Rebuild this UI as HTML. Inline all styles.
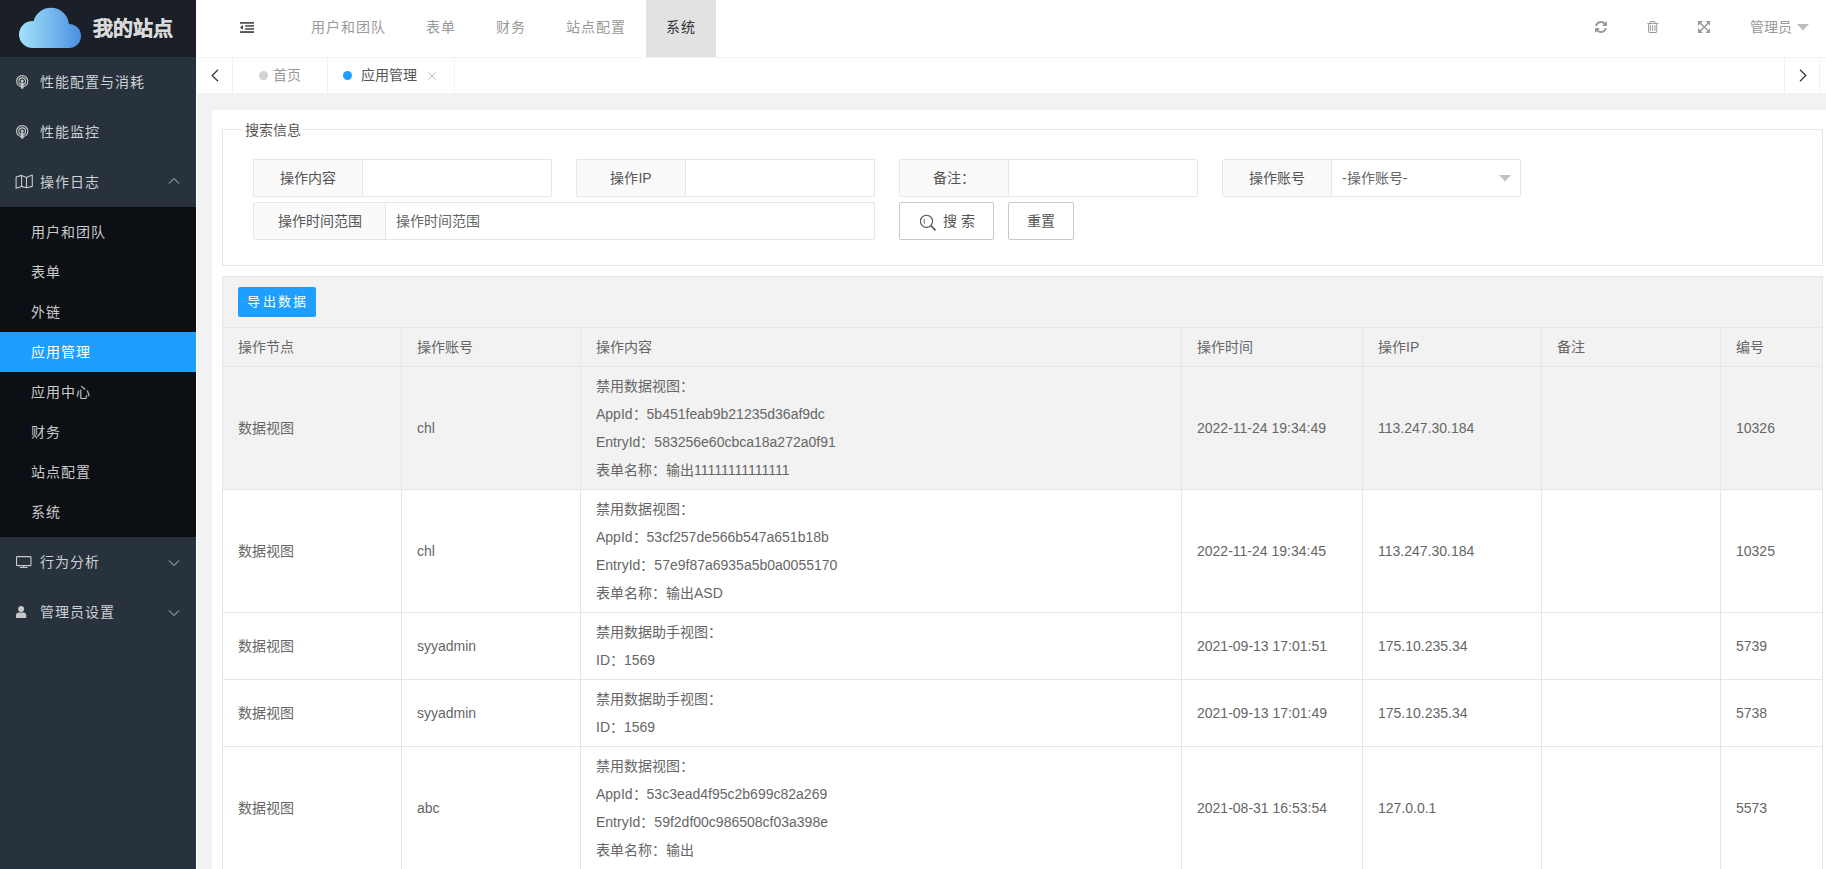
<!DOCTYPE html>
<html lang="zh-CN">
<head>
<meta charset="utf-8">
<style>
*{margin:0;padding:0;box-sizing:border-box}
html,body{width:1826px;height:869px;overflow:hidden;background:#f2f2f2;font-family:"Liberation Sans",sans-serif;font-size:14px;color:#666}
.abs{position:absolute}
.a{position:absolute;white-space:nowrap}
#side{position:absolute;left:0;top:0;width:196px;height:869px;background:#28323c}
#logo{position:absolute;left:0;top:0;width:196px;height:57px;background:#1b2028}
#logo .t{position:absolute;left:93px;top:14px;font-size:20px;font-weight:bold;color:#d9d9d9;line-height:30px;-webkit-text-stroke:0.4px #d9d9d9}
.mi{position:absolute;left:0;width:196px;height:50px;line-height:50px;color:rgba(255,255,255,.78);font-size:14px;letter-spacing:1px}
.mi .tx{position:absolute;left:40px;top:0}
.mi svg{position:absolute}
#sub{position:absolute;left:0;top:207px;width:196px;height:330px;background:#0c0f13}
.si{position:absolute;left:0;width:196px;height:40px;line-height:40px;color:rgba(255,255,255,.78);font-size:14px;letter-spacing:1px}
.si .tx{position:absolute;left:31px;top:0}
.si.on{background:#1e9fff;color:#fff}
#sideline{position:absolute;left:196px;top:0;width:1px;height:869px;background:#fff}
#hdr{position:absolute;left:197px;top:0;width:1629px;height:58px;background:#fff;border-bottom:1px solid #f2f2f2}
.nav{position:absolute;top:0;height:57px;line-height:54px;color:#999;font-size:14px;letter-spacing:1px}
#tabs{position:absolute;left:197px;top:58px;width:1629px;height:35px;background:#fff}
.tsep{position:absolute;top:0;width:1px;height:35px;background:#f2f2f2}
#card{position:absolute;left:212px;top:110px;width:1630px;height:800px;background:#fff;border-radius:2px}
.box{position:absolute;height:38px;border:1px solid #e6e6e6;border-radius:2px;background:#fff}
.box .lb{position:absolute;left:0;top:0;height:36px;line-height:36px;background:#fafafa;border-right:1px solid #e6e6e6;text-align:center;color:#555}
.btn{position:absolute;height:38px;line-height:36px;border:1px solid #c9c9c9;border-radius:2px;background:#fff;color:#555;text-align:center}
.hl{position:absolute;height:1px;background:#e6e6e6}
.vl{position:absolute;width:1px;background:#e6e6e6}
.c{position:absolute;white-space:nowrap;line-height:28px;color:#666}
</style>
</head>
<body>
<div id="side">
  <div id="logo">
    <svg class="abs" style="left:0;top:0" width="90" height="57" viewBox="0 0 90 57">
      <defs><linearGradient id="cg" gradientUnits="userSpaceOnUse" x1="19" y1="0" x2="81" y2="0"><stop offset="0" stop-color="#a3e2fa"/><stop offset="0.5" stop-color="#78baee"/><stop offset="1" stop-color="#4a8ee0"/></linearGradient></defs>
      <g fill="url(#cg)">
        <circle cx="32.5" cy="34.5" r="13.5"/>
        <circle cx="51" cy="25.7" r="18"/>
        <circle cx="69" cy="36" r="12"/>
        <rect x="32" y="30" width="38" height="18"/>
      </g>
    </svg>
    <div class="t">我的站点</div>
  </div>
  <div class="mi" style="top:57px">
    <svg style="left:15px;top:17px" width="15" height="16" viewBox="0 0 15 16"><g fill="none" stroke="#c8c8c8" stroke-width="1.1"><circle cx="7.2" cy="7.2" r="5.6"/><circle cx="7.2" cy="7.2" r="3.3"/></g><circle cx="7.2" cy="7" r="1.5" fill="#c8c8c8"/><rect x="5.8" y="8.6" width="2.8" height="6.2" rx="1.1" fill="#c8c8c8"/></svg>
    <span class="tx">性能配置与消耗</span></div>
  <div class="mi" style="top:107px">
    <svg style="left:15px;top:17px" width="15" height="16" viewBox="0 0 15 16"><g fill="none" stroke="#c8c8c8" stroke-width="1.1"><circle cx="7.2" cy="7.2" r="5.6"/><circle cx="7.2" cy="7.2" r="3.3"/></g><circle cx="7.2" cy="7" r="1.5" fill="#c8c8c8"/><rect x="5.8" y="8.6" width="2.8" height="6.2" rx="1.1" fill="#c8c8c8"/></svg>
    <span class="tx">性能监控</span></div>
  <div class="mi" style="top:157px">
    <svg style="left:15px;top:17px" width="19" height="16" viewBox="0 0 19 16"><path d="M1.1 3 L6.6 1.4 L11.5 3.4 L17.3 1.1 V12.4 L11.5 13.7 L6.6 12.4 L1.1 14.3 Z M6.6 1.4 V12.4 M11.5 3.4 V13.7" fill="none" stroke="#c8c8c8" stroke-width="1.1" stroke-linejoin="round"/></svg>
    <span class="tx">操作日志</span>
    <svg style="left:168px;top:19.5px" width="13" height="8" viewBox="0 0 13 8"><path d="M1 6.5 L6 1.5 L11 6.5" fill="none" stroke="#c8c8c8" stroke-width="1"/></svg>
  </div>
  <div id="sub">
    <div class="si" style="top:5px"><span class="tx">用户和团队</span></div>
    <div class="si" style="top:45px"><span class="tx">表单</span></div>
    <div class="si" style="top:85px"><span class="tx">外链</span></div>
    <div class="si on" style="top:125px"><span class="tx">应用管理</span></div>
    <div class="si" style="top:165px"><span class="tx">应用中心</span></div>
    <div class="si" style="top:205px"><span class="tx">财务</span></div>
    <div class="si" style="top:245px"><span class="tx">站点配置</span></div>
    <div class="si" style="top:285px"><span class="tx">系统</span></div>
  </div>
  <div class="mi" style="top:537px">
    <svg style="left:15px;top:17px" width="18" height="15" viewBox="0 0 18 15"><rect x="1.55" y="2.65" width="14.4" height="9" rx="0.6" fill="none" stroke="#c8c8c8" stroke-width="1.1"/><path d="M8.75 11.7 V13.4 M4.8 13.5 H12.5" stroke="#c8c8c8" stroke-width="1.1"/></svg>
    <span class="tx">行为分析</span>
    <svg style="left:168px;top:21.5px" width="13" height="8" viewBox="0 0 13 8"><path d="M1 1.5 L6 6.5 L11 1.5" fill="none" stroke="#c8c8c8" stroke-width="1"/></svg>
  </div>
  <div class="mi" style="top:587px">
    <svg style="left:15px;top:18px" width="12" height="14" viewBox="0 0 12 14"><circle cx="6.1" cy="4" r="3" fill="#c8c8c8"/><path d="M1 13 V10.4 Q1 7.5 3.9 7.5 H8.3 Q11.2 7.5 11.2 10.4 V13 Z" fill="#c8c8c8"/></svg>
    <span class="tx">管理员设置</span>
    <svg style="left:168px;top:21.5px" width="13" height="8" viewBox="0 0 13 8"><path d="M1 1.5 L6 6.5 L11 1.5" fill="none" stroke="#c8c8c8" stroke-width="1"/></svg>
  </div>
</div>
<div id="sideline"></div>

<div id="hdr">
  <svg class="abs" style="left:43px;top:22px" width="14" height="11" viewBox="0 0 14 11"><g fill="#444"><rect x="0" y="0.1" width="14" height="1.6"/><rect x="5.2" y="3.2" width="8.8" height="1.5"/><rect x="5.2" y="6.2" width="8.8" height="1.5"/><rect x="0" y="9.2" width="14" height="1.7"/><path d="M0 5.4 L3 3 V7.8 Z"/></g></svg>
  <span class="nav" style="left:114px">用户和团队</span>
  <span class="nav" style="left:229px">表单</span>
  <span class="nav" style="left:299px">财务</span>
  <span class="nav" style="left:369px">站点配置</span>
  <div class="abs" style="left:449px;top:0;width:70px;height:57px;background:#e2e2e2"></div>
  <span class="nav" style="left:469px;color:#333">系统</span>
  <!-- right icons -->
  <svg class="abs" style="left:1398px;top:21px" width="12" height="12" viewBox="0 0 1536 1536"><path fill="#999" d="M1511 928q0 5-1 7-64 268-268 434.5T764 1536q-146 0-282.5-55T238 1324l-129 129q-19 19-45 19t-45-19-19-45V960q0-26 19-45t45-19h448q26 0 45 19t19 45-19 45l-137 137q71 66 161 102t187 36q134 0 250-65t186-179q11-17 53-117 8-23 30-23h192q13 0 22.5 9.5t9.5 22.5zm25-800v448q0 26-19 45t-45 19h-448q-26 0-45-19t-19-45 19-45l138-138Q969 256 768 256q-134 0-250 65T332 500q-11 17-53 117-8 23-30 23H50q-13 0-22.5-9.5T18 608v-7q65-268 270-434.5T768 0q146 0 284 55.5T1297 212l130-129q19-19 45-19t45 19 19 45z"/></svg>
  <svg class="abs" style="left:1450px;top:21px" width="12" height="12" viewBox="0 0 12 12"><g fill="none" stroke="#999" stroke-width="1"><path d="M0.3 2.4 H11.3"/><path d="M3.3 2.4 V1.2 Q3.3 0.5 4 0.5 H7.3 Q8 0.5 8 1.2 V2.4"/><path d="M1.6 2.4 V10.8 Q1.6 11.5 2.3 11.5 H9 Q9.7 11.5 9.7 10.8 V2.4"/><path d="M3.35 4.2 V9.8 M5.65 4.2 V9.8 M7.95 4.2 V9.8"/></g></svg>
  <svg class="abs" style="left:1500.5px;top:21px" width="12.5" height="12" viewBox="0 0 12.5 12"><g fill="#999"><path d="M0 0 H5 L0 5 Z"/><path d="M12.5 0 H7.5 L12.5 5 Z"/><path d="M0 12 H5 L0 7 Z"/><path d="M12.5 12 H7.5 L12.5 7 Z"/></g><path d="M1.5 1.5 L11 10.5 M11 1.5 L1.5 10.5" stroke="#999" stroke-width="1.5"/></svg>
  <span class="nav" style="left:1553px;letter-spacing:0">管理员</span>
  <svg class="abs" style="left:1600px;top:24px" width="12" height="7" viewBox="0 0 12 7"><path d="M0 0 H12 L6 6.5 Z" fill="#bdbdbd"/></svg>
</div>

<div id="tabs">
  <svg class="abs" style="left:14px;top:10.5px" width="8" height="13" viewBox="0 0 8 13"><path d="M7 0.8 L1.2 6.5 L7 12.2" fill="none" stroke="#333" stroke-width="1.2"/></svg>
  <div class="tsep" style="left:35px"></div>
  <div class="abs" style="left:62px;top:13px;width:9px;height:9px;border-radius:50%;background:#d2d2d2"></div>
  <span class="a" style="left:76px;top:0;line-height:35px;color:#999;font-size:14px">首页</span>
  <div class="tsep" style="left:130px"></div>
  <div class="abs" style="left:146px;top:13px;width:9px;height:9px;border-radius:50%;background:#1e9fff"></div>
  <span class="a" style="left:164px;top:0;line-height:35px;color:#555;font-size:14px">应用管理</span>
  <svg class="abs" style="left:231px;top:14.3px" width="8" height="8" viewBox="0 0 8 8"><path d="M0.3 0.3 L7.7 7.7 M7.7 0.3 L0.3 7.7" stroke="#c2c2c2" stroke-width="1"/></svg>
  <div class="tsep" style="left:257px"></div>
  <div class="tsep" style="left:1587px"></div>
  <svg class="abs" style="left:1602px;top:11px" width="8" height="13" viewBox="0 0 8 13"><path d="M1 0.8 L6.8 6.5 L1 12.2" fill="none" stroke="#333" stroke-width="1.2"/></svg>
  <div class="tsep" style="left:1622px"></div>
</div>

<div id="card"></div>

<!-- fieldset -->
<div class="abs" style="left:222px;top:129px;width:1601px;height:137px;border:1px solid #e6e6e6"></div>
<div class="abs" style="left:243px;top:120px;width:60px;height:20px;background:#fff"></div>
<span class="a" style="left:245px;top:120px;line-height:20px;color:#555">搜索信息</span>

<div class="box" style="left:253px;top:159px;width:299px"><div class="lb" style="width:109px">操作内容</div></div>
<div class="box" style="left:576px;top:159px;width:299px"><div class="lb" style="width:109px">操作IP</div></div>
<div class="box" style="left:899px;top:159px;width:299px"><div class="lb" style="width:109px">备注：</div></div>
<div class="box" style="left:1222px;top:159px;width:299px"><div class="lb" style="width:109px">操作账号</div>
  <span class="a" style="left:119px;top:0;line-height:36px;color:#666">-操作账号-</span>
  <svg class="abs" style="left:276px;top:15px" width="12" height="7" viewBox="0 0 12 7"><path d="M0 0 H12 L6 6.5 Z" fill="#c2c2c2"/></svg>
</div>
<div class="box" style="left:253px;top:202px;width:622px"><div class="lb" style="width:132px">操作时间范围</div>
  <span class="a" style="left:142px;top:0;line-height:36px;color:#666">操作时间范围</span>
</div>
<div class="btn" style="left:899px;top:202px;width:95px">
  <svg class="abs" style="left:19px;top:11px" width="18" height="18" viewBox="0 0 18 18"><circle cx="7.5" cy="7.3" r="6.1" fill="none" stroke="#555" stroke-width="1.1"/><path d="M12.2 12 L16 15.8" stroke="#555" stroke-width="1.7" stroke-linecap="round"/><path d="M5.6 5.2 Q4.2 7.4 5.6 9.6" fill="none" stroke="#555" stroke-width="0.9"/></svg>
  <span class="a" style="left:43px;top:0;letter-spacing:4px">搜索</span>
</div>
<div class="btn" style="left:1008px;top:202px;width:66px">重置</div>

<!-- table toolbar -->
<div class="abs" style="left:222px;top:276px;width:1601px;height:52px;background:#f2f2f2;border:1px solid #e6e6e6;border-bottom:none"></div>
<div class="abs" style="left:238px;top:287px;width:78px;height:30px;background:#1e9fff;border-radius:2px;color:#fff;font-size:13px;line-height:30px;padding-left:9.3px;letter-spacing:2.4px">导出数据</div>

<!-- table -->
<div class="abs" style="left:222px;top:327px;width:1601px;height:40px;background:#f2f2f2"></div>
<div class="abs" style="left:222px;top:366px;width:1601px;height:124px;background:#f2f2f2"></div>
<div class="abs" style="left:222px;top:489px;width:1601px;height:380px;background:#fff"></div>
<div class="hl" style="left:222px;top:327px;width:1601px"></div>
<div class="hl" style="left:222px;top:366px;width:1601px"></div>
<div class="hl" style="left:222px;top:489px;width:1601px"></div>
<div class="hl" style="left:222px;top:612px;width:1601px"></div>
<div class="hl" style="left:222px;top:679px;width:1601px"></div>
<div class="hl" style="left:222px;top:746px;width:1601px"></div>
<div class="vl" style="left:222px;top:276px;height:600px"></div>
<div class="vl" style="left:401px;top:327px;height:550px"></div>
<div class="vl" style="left:580px;top:327px;height:550px"></div>
<div class="vl" style="left:1181px;top:327px;height:550px"></div>
<div class="vl" style="left:1362px;top:327px;height:550px"></div>
<div class="vl" style="left:1541px;top:327px;height:550px"></div>
<div class="vl" style="left:1720px;top:327px;height:550px"></div>
<div class="vl" style="left:1822px;top:276px;height:600px"></div>

<div id="tbl">
<span class="c" style="left:238px;top:333px">操作节点</span>
<span class="c" style="left:417px;top:333px">操作账号</span>
<span class="c" style="left:596px;top:333px">操作内容</span>
<span class="c" style="left:1197px;top:333px">操作时间</span>
<span class="c" style="left:1378px;top:333px">操作IP</span>
<span class="c" style="left:1557px;top:333px">备注</span>
<span class="c" style="left:1736px;top:333px">编号</span>

<span class="c" style="left:238px;top:414px">数据视图</span>
<span class="c" style="left:417px;top:414px">chl</span>
<span class="c" style="left:596px;top:372px">禁用数据视图：</span>
<span class="c" style="left:596px;top:400px">AppId：5b451feab9b21235d36af9dc</span>
<span class="c" style="left:596px;top:428px">EntryId：583256e60cbca18a272a0f91</span>
<span class="c" style="left:596px;top:456px">表单名称：输出11111111111111</span>
<span class="c" style="left:1197px;top:414px">2022-11-24 19:34:49</span>
<span class="c" style="left:1378px;top:414px">113.247.30.184</span>
<span class="c" style="left:1736px;top:414px">10326</span>

<span class="c" style="left:238px;top:537px">数据视图</span>
<span class="c" style="left:417px;top:537px">chl</span>
<span class="c" style="left:596px;top:495px">禁用数据视图：</span>
<span class="c" style="left:596px;top:523px">AppId：53cf257de566b547a651b18b</span>
<span class="c" style="left:596px;top:551px">EntryId：57e9f87a6935a5b0a0055170</span>
<span class="c" style="left:596px;top:579px">表单名称：输出ASD</span>
<span class="c" style="left:1197px;top:537px">2022-11-24 19:34:45</span>
<span class="c" style="left:1378px;top:537px">113.247.30.184</span>
<span class="c" style="left:1736px;top:537px">10325</span>

<span class="c" style="left:238px;top:632px">数据视图</span>
<span class="c" style="left:417px;top:632px">syyadmin</span>
<span class="c" style="left:596px;top:618px">禁用数据助手视图：</span>
<span class="c" style="left:596px;top:646px">ID：1569</span>
<span class="c" style="left:1197px;top:632px">2021-09-13 17:01:51</span>
<span class="c" style="left:1378px;top:632px">175.10.235.34</span>
<span class="c" style="left:1736px;top:632px">5739</span>

<span class="c" style="left:238px;top:699px">数据视图</span>
<span class="c" style="left:417px;top:699px">syyadmin</span>
<span class="c" style="left:596px;top:685px">禁用数据助手视图：</span>
<span class="c" style="left:596px;top:713px">ID：1569</span>
<span class="c" style="left:1197px;top:699px">2021-09-13 17:01:49</span>
<span class="c" style="left:1378px;top:699px">175.10.235.34</span>
<span class="c" style="left:1736px;top:699px">5738</span>

<span class="c" style="left:238px;top:794px">数据视图</span>
<span class="c" style="left:417px;top:794px">abc</span>
<span class="c" style="left:596px;top:752px">禁用数据视图：</span>
<span class="c" style="left:596px;top:780px">AppId：53c3ead4f95c2b699c82a269</span>
<span class="c" style="left:596px;top:808px">EntryId：59f2df00c986508cf03a398e</span>
<span class="c" style="left:596px;top:836px">表单名称：输出</span>
<span class="c" style="left:1197px;top:794px">2021-08-31 16:53:54</span>
<span class="c" style="left:1378px;top:794px">127.0.0.1</span>
<span class="c" style="left:1736px;top:794px">5573</span>
</div>
</body>
</html>
